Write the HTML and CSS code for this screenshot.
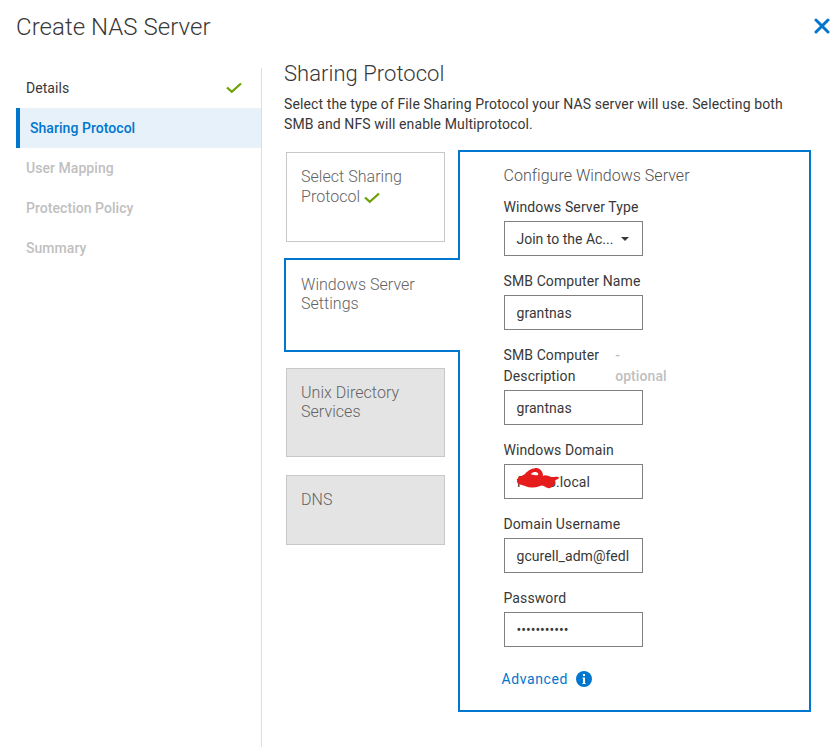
FILE: index.html
```html
<!DOCTYPE html>
<html lang="en">
<head>
<meta charset="utf-8">
<title>Create NAS Server</title>
<link rel="stylesheet" href="styles.css">
</head>
<body>
<header class="header">
  <h1 class="title"><span>Create NAS Server</span></h1>
  <svg class="close" viewBox="0 0 16 16"><path d="M2 2L14 14M14 2L2 14"/></svg>
</header>
<div class="layout">
  <nav class="steps">
    <div class="step done"><span>Details</span><svg class="check" viewBox="0 0 16 12"><path d="M1 5.5L5.8 9.8L15 1.5"/></svg></div>
    <div class="step current"><span>Sharing Protocol</span></div>
    <div class="step"><span>User Mapping</span></div>
    <div class="step"><span>Protection Policy</span></div>
    <div class="step"><span>Summary</span></div>
  </nav>
  <main class="main">
    <h2 class="heading"><span>Sharing Protocol</span></h2>
    <p class="intro"><span>Select the type of File Sharing Protocol your NAS server will use. Selecting both</span><br><span>SMB and NFS will enable Multiprotocol.</span></p>
    <div class="wizard">
      <div class="tabs">
        <div class="tab first"><span>Select Sharing</span><br><span>Protocol</span> <svg class="check" viewBox="0 0 16 12"><path d="M1 5.5L5.8 9.8L15 1.5"/></svg></div>
        <div class="tab active"><span>Windows Server</span><br><span>Settings</span></div>
        <div class="tab disabled"><span>Unix Directory</span><br><span>Services</span></div>
        <div class="tab disabled short"><span>DNS</span></div>
      </div>
      <section class="panel">
        <h3 class="panel-title"><span>Configure Windows Server</span></h3>
        <div class="field"><div class="label"><span>Windows Server Type</span></div><div class="input select"><span>Join to the Ac...</span><svg class="caret" viewBox="0 0 8 4"><path d="M0 0H8L4 4Z"/></svg></div></div>
        <div class="field"><div class="label"><span>SMB Computer Name</span></div><div class="input"><span>grantnas</span></div></div>
        <div class="field"><div class="label split"><div><span>SMB Computer</span><br><span>Description</span></div><div class="optional">-<br>optional</div></div><div class="input"><span>grantnas</span></div></div>
        <div class="field"><div class="label"><span>Windows Domain</span></div><div class="input domain"><span class="initial">f</span><span class="last">o</span><span>.local</span>
          <svg class="scribble" viewBox="0 0 44 24"><path fill-rule="evenodd" d="M1 14C1 10 6 9 9 7C12 3 17 1 21 1C25 2 27 5 27 9C30 7 33 10 36 10C38 10 42 9 43 10.5C43 12.5 40 12 39 14C39 17 37 20 34 21C31 22 29 19 26 18.5C23 19 21 20.5 17 20.5C12 21 8 18 4 17.5C2 17 1 16 1 14ZM15 7.5C17 7 20 9 22 8C23 6 21 5 19 5C17 5 15 6 15 7.5Z"/></svg></div></div>
        <div class="field"><div class="label"><span>Domain Username</span></div><div class="input"><span>gcurell_adm@fedl</span></div></div>
        <div class="field"><div class="label"><span>Password</span></div><div class="input"><span class="dots">•••••••••••</span></div></div>
        <div class="advanced"><span>Advanced</span><svg class="info" viewBox="0 0 16 16"><circle cx="8" cy="8" r="8"/><path d="M7 3h2v2H7zM6.5 6.5H9V12h.7v1H6.3v-1H7V7.5h-.5z"/></svg></div>
      </section>
    </div>
  </main>
</div>
</body>
</html>
```
FILE: styles.css
```css
* { box-sizing: border-box; }
body { margin: 0; width: 839px; height: 747px; overflow: hidden; background: #fff; color: #383838; font: 14px/20px Roboto, sans-serif; letter-spacing: .1px; }
h1, h2, h3, p { margin: 0; font-weight: 300; }
.header { height: 68px; padding: 12px 9px 0 16px; display: flex; justify-content: space-between; align-items: flex-start; }
.title { font-size: 24px; line-height: 30px; letter-spacing: .04px; }
.close { width: 16px; height: 16px; margin-top: 6px; fill: none; stroke: #0076ce; stroke-width: 3; stroke-linecap: round; }
.layout { display: flex; height: 679px; }
.steps { width: 246px; margin-left: 16px; border-right: 1px solid #dedede; flex: none; }
.step { height: 40px; display: flex; align-items: center; justify-content: space-between; padding: 0 19px 0 10px; color: #bfbfbf; font-weight: 500; letter-spacing: .05px; }
.step.done { color: #383838; font-weight: 400; }
.step.current { background: #e6f1fa; color: #0076ce; border-left: 4px solid #0076ce; }
.check { width: 16px; height: 12px; fill: none; stroke: #6ea204; stroke-width: 2.3; }
.main { width: 527px; margin-left: 22px; }
.heading { font-size: 22px; line-height: 26px; height: 26px; margin-top: -7px; letter-spacing: .04px; }
.intro { margin-top: 7px; font-weight: 400; letter-spacing: .11px; }
.wizard { display: flex; margin-top: 16px; height: 562px; }
.tabs { width: 174px; flex: none; padding-top: 2px; }
.tab { width: 159px; height: 90px; margin-left: 2px; border: 1px solid #c8c8c8; padding: 14px; font-size: 16px; line-height: 19px; font-weight: 300; color: #636363; letter-spacing: .04px; }
.tab.first { line-height: 20px; }
.tab .check { margin-bottom: -2px; }
.tab.active { position: relative; width: 176px; height: 94px; margin: 16px 0 16px; border: 2px solid #0076ce; border-right: 0; background: #fff; padding: 15px; }
.tab.disabled { background: #e4e4e4; height: 89px; }
.tab.disabled.short { height: 70px; margin-top: 18px; }
.panel { width: 353px; border: 2px solid #0076ce; padding: 14px 0 0 44px; }
.panel-title { font-size: 16px; line-height: 20px; color: #505050; margin: 0 0 11px -.5px; letter-spacing: .03px; }
.label { line-height: 21px; height: 21px; margin: 0 0 3px -.5px; }
.field + .field { margin-top: 15px; }
.label.split { display: flex; height: 42px; }
.optional { color: #bfbfbf; margin-left: 16px; font-weight: 500; letter-spacing: .08px; }
.input { width: 139px; height: 35px; border: 1px solid #808080; padding: 0 11.5px; display: flex; align-items: center; position: relative; white-space: nowrap; letter-spacing: .05px; }
.select { letter-spacing: 0; }
.caret { width: 8px; height: 4px; margin-left: 8px; fill: #383838; flex: none; }
.domain { letter-spacing: .08px; }
.initial { width: 31.5px; }
.scribble { position: absolute; left: 11px; top: 2px; width: 44px; height: 24px; fill: #e61c1c; }
.dots { letter-spacing: 0; }
.advanced { margin: 22px 0 0 -2.5px; display: flex; align-items: center; gap: 7.5px; color: #0076ce; letter-spacing: .6px; }
.info { width: 16px; height: 16px; fill: #0076ce; }
.info path { fill: #fff; }
```
